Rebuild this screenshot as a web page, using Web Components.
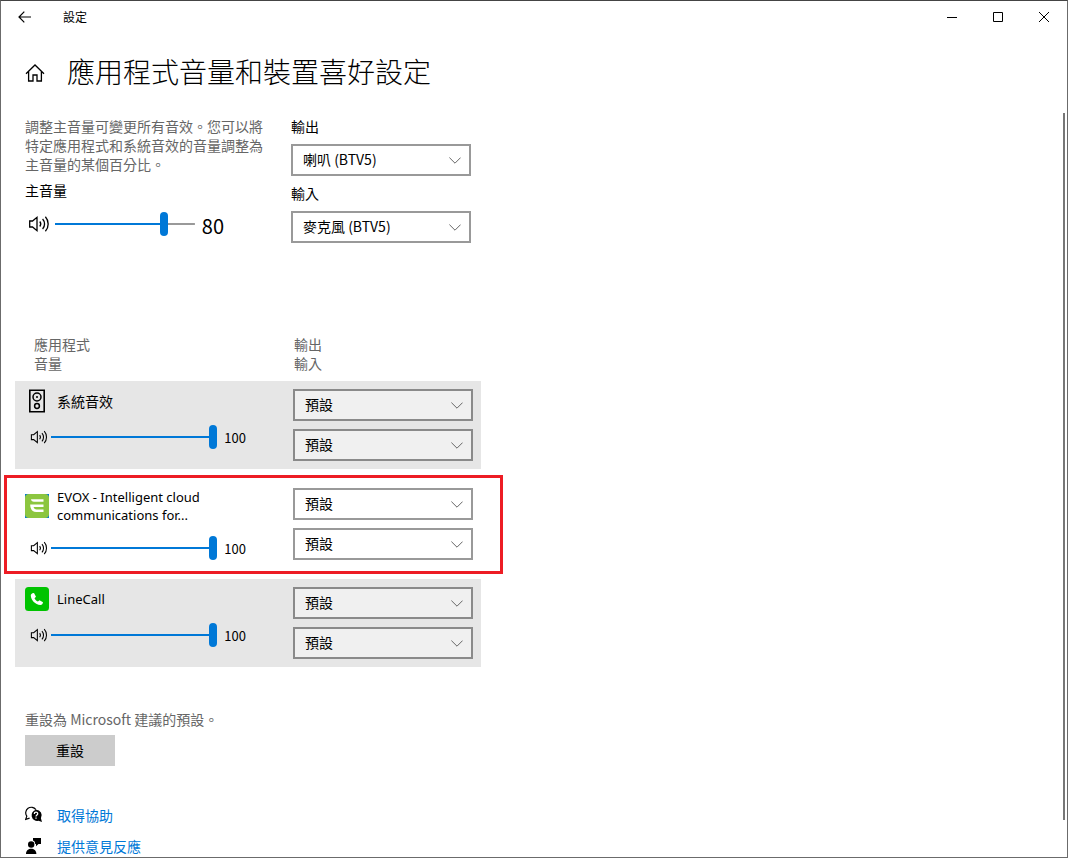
<!DOCTYPE html>
<html lang="zh-Hant">
<head>
<meta charset="utf-8">
<meta name="viewport" content="width=device-width">
<title>設定</title>
<style>
  body { margin: 0; background: #fff; color: #000; font: 14px/19px "Noto Sans CJK TC", sans-serif; }
</style>
</head>
<body>
<settings-window>
  <page-heading slot="heading">應用程式音量和裝置喜好設定</page-heading>
  <master-panel></master-panel>
  <app-list>
    <app-mixer icon="speaker">系統音效</app-mixer>
    <app-mixer icon="evox" lang="en" plain highlight>EVOX - Intelligent cloud communications for...</app-mixer>
    <app-mixer icon="call" lang="en">LineCall</app-mixer>
  </app-list>
  <reset-panel></reset-panel>
  <help-link icon="help">取得協助</help-link>
  <help-link icon="feedback">提供意見反應</help-link>
</settings-window>

<script>
const ICONS = {
  back: `<svg width="14" height="12" viewBox="0 0 14 12" fill="none" stroke="#000" stroke-width="1.2"><path d="M13 6H1M6.3.7 1 6l5.300 5.300"/></svg>`,
  home: `<svg width="20" height="20" viewBox="0 0 20 20" fill="none" stroke="#000" stroke-width="1.300"><path d="M1 10.700 10 2l9 8.700M3.600 8.500V18H8v-6h4v6h4.400V8.500"/></svg>`,
  min: `<svg width="10" height="10" viewBox="0 0 10 10" stroke="#000"><path d="M0 5.500h10"/></svg>`,
  max: `<svg width="10" height="10" viewBox="0 0 10 10" fill="none" stroke="#000"><path d="M.5.5h9v9h-9z"/></svg>`,
  close: `<svg width="10" height="10" viewBox="0 0 10 10" stroke="#000"><path d="m0 0 10 10M10 0 0 10"/></svg>`,
  volume: `<svg viewBox="0 0 22 20" fill="none" stroke="#000" stroke-width="1.300"><path d="M1.700 7v6h2.800L9 16.700V3.300L4.500 7zM11.800 7.500a4 4 0 0 1 0 5M14.600 5a7.400 7.400 0 0 1 0 10M17.400 2.700a11 11 0 0 1 0 14.600"/></svg>`,
  speaker: `<svg width="24" height="24" viewBox="0 0 24 24" fill="none" stroke="#000" stroke-width="1.500"><path stroke-width="1.600" d="M4.800 1.300h14.400v21.400H4.800z"/><circle cx="12" cy="8" r="4"/><circle cx="12" cy="17" r="2.400"/><circle cx="12" cy="8" r="1" fill="#000" stroke="none"/></svg>`,
  evox: `<svg width="24" height="24" viewBox="0 0 24 24"><path fill="#0078d7" d="M0 0h24v24H0z"/><rect width="24" height="24" rx="4" fill="#8cc63f"/><path fill="#fff" d="M6 5.300h12.500v2.500H9C7.200 7.800 6.100 6.900 6 5.300zM5.200 10.600h13.300v2.500H8.600c.3 1.600 1.300 2.300 3 2.300h6.900v2.500h-7.300c-3.800 0-6-2.700-6-7.300z"/></svg>`,
  call: `<svg width="24" height="24" viewBox="0 0 24 24"><rect width="24" height="24" rx="3.500" fill="#00c300"/><path fill="#fff" d="M7.400 6.300 9 6l2 3.700-1.500 1.500c.7 1.600 1.800 2.700 3.400 3.400l1.600-1.400 3.500 2.100c-.1 1.700-1.200 2.800-2.700 2.700C10.400 17.700 6 13 5.800 8.700c0-1.200.7-2 1.600-2.400z"/></svg>`,
  help: `<svg width="18" height="18" viewBox="0 0 18 18"><path fill="none" stroke="#000" stroke-width="1.200" d="M4.600 12.100.7 13.300l1.100-3.100A5.200 5.200 0 1 1 10.900 3.600"/><path d="M11 3.700a5.600 5.600 0 0 1 4.900 8.500l1.100 3.900-3.500-1.300A5.600 5.600 0 1 1 11 3.700z"/><path fill="none" stroke="#fff" stroke-width="1.300" d="M9.300 7.900c0-2.200 3.400-2.200 3.400-.2 0 1.200-1.700 1.300-1.700 2.700M11 11.400v1.400"/></svg>`,
  feedback: `<svg width="18" height="18" viewBox="0 0 18 18"><circle cx="6.200" cy="7.500" r="3.200"/><path d="M1 17c0-7 10.400-7 10.400 0zM8 1h8v6h-2.500L11 9.300V7h-.8C10 5 9.300 4 8 3.600z"/></svg>`,
  chevron: `<svg width="12" height="7" viewBox="0 0 12 7" fill="none" stroke="#666"><path d="m.4.6 5.600 5.600L11.600.6"/></svg>`
};

class Part extends HTMLElement {
  connectedCallback() {
    if (this.shadowRoot) return;
    const root = this.attachShadow({ mode: "open" });
    const t = document.createElement("template");
    t.innerHTML = `<style>*{box-sizing:border-box} svg{display:block} button{font:inherit;color:inherit;border:0;padding:0;background:none} ${this.css()}</style>${this.html()}`;
    root.append(t.content.cloneNode(true));
    this.ready?.(root);
  }
}

customElements.define("settings-window", class extends Part {
  css() { return `
    :host{display:flex;flex-direction:column;box-sizing:border-box;height:100vh;border:1px solid #6b6b6b;border-top-color:#444;background:#fff;overflow:hidden}
    header{display:flex;align-items:center;height:32px;flex:none;font-size:12px;line-height:16px}
    button{height:32px;width:46px;display:grid;place-items:center}
    .back{width:48px}
    .title{flex:1;padding-left:14px}
    .body{flex:1;min-height:0;display:flex}
    main{flex:1;min-width:0;overflow:auto;scrollbar-width:none}
    .thumb{width:2px;margin:80px 2px 37px 0;background:#777}`; }
  html() { return `
    <header><button class="back" aria-label="返回">${ICONS.back}</button><span class="title">設定</span>
      <button aria-label="最小化">${ICONS.min}</button><button aria-label="最大化">${ICONS.max}</button><button aria-label="關閉">${ICONS.close}</button></header>
    <div class="body"><main><slot name="heading"></slot><slot></slot></main><div class="thumb"></div></div>`; }
});

customElements.define("page-heading", class extends Part {
  css() { return `
    :host{display:flex;align-items:center;gap:22px;padding:20px 24px 24px}
    h1{margin:0;padding-bottom:4px;font-size:28px;line-height:36px;font-weight:300}`; }
  html() { return `${ICONS.home}<h1><slot></slot></h1>`; }
});

customElements.define("volume-slider", class extends Part {
  css() { return `
    :host{display:flex;align-items:center;height:24px;font-size:13px;--icon:18px;--gap:3px;--drop:2px}
    :host([large]){font-size:20px;--icon:22px;--gap:5px;--drop:4px}
    label{flex:none;width:var(--icon)}
    input{appearance:none;flex:1;min-width:0;height:24px;margin:0 7px 0 var(--gap);background:linear-gradient(to right,#0078d7 var(--level),#999 var(--level)) center/100% 2px no-repeat}
    input::-webkit-slider-thumb{appearance:none;width:8px;height:24px;border-radius:4px;background:#0078d7}
    input::-moz-range-thumb{width:8px;height:24px;border:0;border-radius:4px;background:#0078d7}
    output{flex:none;line-height:24px;padding-top:var(--drop)}`; }
  html() {
    const v = this.getAttribute("value");
    return `<label for="v" aria-label="音量">${ICONS.volume}</label><input id="v" type="range" value="${v}" style="--level:${v}%"><output for="v">${v}</output>`;
  }
  ready(root) {
    const input = root.querySelector("input");
    input.addEventListener("input", () => {
      input.style.setProperty("--level", input.value + "%");
      root.querySelector("output").textContent = input.value;
    });
  }
});

customElements.define("device-select", class extends Part {
  css() { return `
    :host{display:grid;gap:8px}
    .box{display:grid;align-items:center}
    select{grid-area:1/1;appearance:none;width:100%;height:32px;margin:0;padding:0 32px 2px 10px;border:2px solid var(--edge,#999);border-radius:0;background:var(--fill,#fff);color:#000;font:inherit}
    svg{grid-area:1/1;justify-self:end;margin-right:10px;pointer-events:none}`; }
  html() {
    const name = this.getAttribute("label"), shown = this.hasAttribute("caption");
    return `${shown ? `<label for="s">${name}</label>` : ""}
      <div class="box"><select id="s" ${shown ? "" : `aria-label="${name}"`}><option>${this.getAttribute("value")}</option></select>${ICONS.chevron}</div>`;
  }
});

customElements.define("master-panel", class extends Part {
  css() { return `
    :host{display:grid;grid-template-columns:238px 180px;gap:28px;padding:0 24px 92px}
    p{margin:0;color:#666}
    h2{margin:7px 0 12px;font-size:14px;line-height:19px;font-weight:400}
    volume-slider{padding:0 39px 0 3px}
    .devices{display:grid;align-content:start;gap:8px}`; }
  html() { return `
    <section><p>調整主音量可變更所有音效。您可以將特定應用程式和系統音效的音量調整為主音量的某個百分比。</p>
      <h2>主音量</h2><volume-slider large value="80"></volume-slider></section>
    <div class="devices"><device-select caption label="輸出" value="喇叭 (BTV5)"></device-select>
      <device-select caption label="輸入" value="麥克風 (BTV5)"></device-select></div>`; }
});

customElements.define("app-list", class extends Part {
  css() { return `
    :host{display:grid;gap:11px;max-width:466px;margin-left:14px}
    .head{display:grid;grid-template-columns:1fr 187px;padding-left:19px;color:#666;margin-bottom:-3px}`; }
  html() { return `<div class="head"><div>應用程式<br>音量</div><div>輸出<br>輸入</div></div><slot></slot>`; }
});

customElements.define("app-mixer", class extends Part {
  css() { return `
    :host{display:grid;grid-template-columns:1fr 180px;gap:47px;position:relative;box-sizing:border-box;height:88px;padding:8px 8px 8px 10px;background:#e6e6e6;--fill:#f0f0f0;--edge:#8a8a8a}
    :host([plain]){background:none;--fill:#fff;--edge:#999}
    :host([highlight])::after{content:"";position:absolute;inset:-5px -22px -6px -11px;border:3px solid #ed1c24;pointer-events:none}
    .name{display:flex;align-items:center;gap:8px;min-height:24px;margin-bottom:12px;line-height:18px}
    .name svg{flex:none}
    :host(:lang(en)) .name{font-family:"Noto Sans",sans-serif;font-size:13px}
    volume-slider{padding-left:5px}
    .devices{display:grid;align-content:start;gap:8px}`; }
  html() { return `
    <div><div class="name">${ICONS[this.getAttribute("icon")]}<span><slot></slot></span></div>
      <volume-slider value="100"></volume-slider></div>
    <div class="devices" lang="zh-Hant"><device-select label="輸出" value="預設"></device-select><device-select label="輸入" value="預設"></device-select></div>`; }
});

customElements.define("reset-panel", class extends Part {
  css() { return `
    :host{display:block;padding:43px 24px 39px}
    p{margin:0 0 6px;color:#666}
    button{display:block;width:90px;height:31px;background:#ccc;font-size:14px}`; }
  html() { return `<p>重設為 Microsoft 建議的預設。</p><button>重設</button>`; }
});

customElements.define("help-link", class extends Part {
  css() { return `
    :host{display:flex;padding:0 24px 11px}
    :host(:last-of-type){padding-bottom:0}
    a{display:flex;align-items:center;gap:14px;height:20px;color:#0078d7;text-decoration:none}`; }
  html() { return `<a href="#">${ICONS[this.getAttribute("icon")]}<span><slot></slot></span></a>`; }
});
</script>
</body>
</html>
